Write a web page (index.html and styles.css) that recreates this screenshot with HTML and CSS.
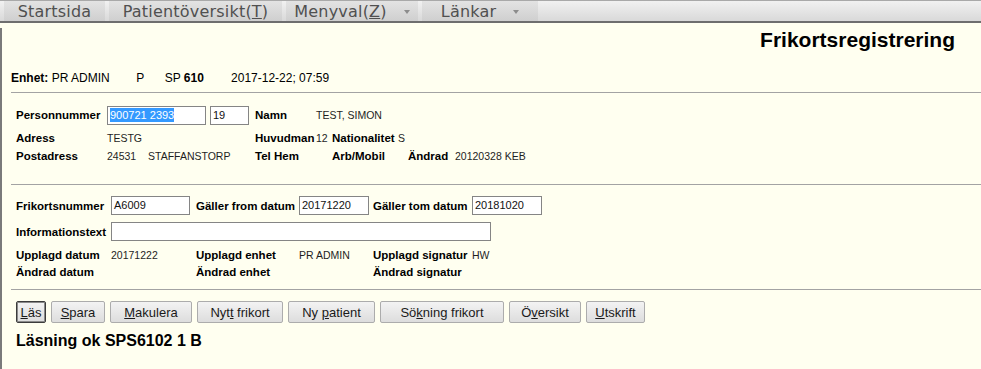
FILE: index.html
```html
<!DOCTYPE html>
<html>
  <head>
    <meta charset="UTF-8">
    <title>Frikortsregistrering</title>
    <link rel="stylesheet" href="styles.css">
  </head>
  <body>
    <!-- Top menu -->
    <div id="menubar">
      <div class="menu-item m-start"><span>Startsida</span></div>
      <div class="menu-item m-patient"><span>Patientöversikt(<u>T</u>)</span></div>
      <div class="menu-item m-menyval"><span>Menyval(<u>Z</u>)</span><span class="caret"></span></div>
      <div class="menu-item m-lankar"><span>Länkar</span><span class="caret"></span></div>
    </div>

    <div id="page">
      <div id="title">Frikortsregistrering</div>

      <!-- Unit line -->
      <div id="unit-line">
        <span class="u-name"><b>Enhet:</b> PR ADMIN</span>
        <span class="u-p">P</span>
        <span class="u-sp">SP <b>610</b></span>
        <span>2017-12-22; 07:59</span>
      </div>

      <div class="divider"></div>

      <!-- Patient -->
      <div class="patient">
        <div class="prow prow-input">
          <span class="lbl w91">Personnummer</span>
          <div class="field f-pnr"><span class="selected">900721 2393</span></div>
          <div class="field f-century">19</div>
          <span class="lbl w61">Namn</span>
          <span class="val">TEST, SIMON</span>
        </div>
        <div class="prow">
          <span class="lbl w91">Adress</span>
          <span class="val w148">TESTG</span>
          <span class="lbl w61">Huvudman</span>
          <span class="val w16">12</span>
          <span class="lbl w66">Nationalitet</span>
          <span class="val">S</span>
        </div>
        <div class="prow">
          <span class="lbl w91">Postadress</span>
          <span class="val w41">24531</span>
          <span class="val w107">STAFFANSTORP</span>
          <span class="lbl w77">Tel Hem</span>
          <span class="lbl w76">Arb/Mobil</span>
          <span class="lbl w47">Ändrad</span>
          <span class="val">20120328 KEB</span>
        </div>
      </div>

      <div class="divider"></div>

      <!-- Frikort -->
      <div class="frikort">
        <div class="frow frow-input">
          <span class="lbl">Frikortsnummer</span>
          <div class="field f-nr">A6009</div>
          <span class="lbl">Gäller from datum</span>
          <div class="field f-date">20171220</div>
          <span class="lbl">Gäller tom datum</span>
          <div class="field f-date">20181020</div>
        </div>
        <div class="frow frow-input frow-info">
          <span class="lbl">Informationstext</span>
          <div class="field f-info"></div>
        </div>
        <div class="frow frow-text frow-first">
          <span class="lbl">Upplagd datum</span>
          <span class="val">20171222</span>
          <span class="lbl">Upplagd enhet</span>
          <span class="val">PR ADMIN</span>
          <span class="lbl">Upplagd signatur</span>
          <span class="val">HW</span>
        </div>
        <div class="frow frow-text">
          <span class="lbl">Ändrad datum</span>
          <span class="val"></span>
          <span class="lbl">Ändrad enhet</span>
          <span class="val"></span>
          <span class="lbl">Ändrad signatur</span>
          <span class="val"></span>
        </div>
      </div>

      <div class="divider"></div>

      <!-- Buttons -->
      <div id="buttons">
        <button class="btn focused b-las"><u>L</u>äs</button>
        <button class="btn b-spara"><u>S</u>para</button>
        <button class="btn b-makulera"><u>M</u>akulera</button>
        <button class="btn b-nytt">Nyt<u>t</u> frikort</button>
        <button class="btn b-nypat">Ny <u>p</u>atient</button>
        <button class="btn b-sok">Sö<u>k</u>ning frikort</button>
        <button class="btn b-oversikt">Ö<u>v</u>ersikt</button>
        <button class="btn b-utskrift"><u>U</u>tskrift</button>
      </div>

      <div id="status">Läsning ok SPS6102 1 B</div>
    </div>
  </body>
</html>
```

FILE: styles.css
```css
/* Reset */
* {
  box-sizing: border-box;
  margin: 0;
  padding: 0;
}

html, body {
  width: 100%;
  height: 100%;
  background-color: #fffff0;
  font-family: "Liberation Sans", Arial, sans-serif;
  color: #000;
  overflow: hidden;
}

/* Top menu bar */
#menubar {
  display: flex;
  gap: 4px;
  height: 23px;
  padding-left: 4px;
  border-top: 1px solid #a9a9a9;
  border-bottom: 2px solid #6e6e6e;
  background: linear-gradient(#f1f1f1, #d9d9d9);
}

.menu-item {
  display: flex;
  align-items: center;
  justify-content: center;
  gap: 17px;
  height: 100%;
  font-family: "DejaVu Sans", Verdana, sans-serif;
  font-size: 16px;
  color: #505050;
  background: linear-gradient(#e3e3e3, #cfcfcf);
  letter-spacing: 0.2px;
  white-space: nowrap;
}

.m-start   { width: 101px; }
.m-patient { width: 173px; }
.m-menyval { width: 132px; }
.m-lankar  { width: 116px; }

/* Small dropdown arrow */
.caret {
  display: inline-block;
  width: 0;
  height: 0;
  border-left: 3px solid transparent;
  border-right: 3px solid transparent;
  border-top: 4px solid #8c8c8c;
  margin-top: 2px;
}

/* Page area under the menu */
#page {
  height: calc(100% - 23px);
  border-left: 2px solid #7a7a7a;
  padding-left: 9px;
}

#title {
  margin-top: 5px;
  padding-right: 26px;
  text-align: right;
  font-size: 21px;
  font-weight: bold;
  line-height: 24px;
}

#unit-line {
  margin-top: 19px;
  font-size: 12px;
  line-height: 14px;
}

#unit-line span {
  display: inline-block;
}

.u-name { width: 122px; }
.u-p    { width: 25px; }
.u-sp   { width: 63px; }

/* Horizontal separators */
.divider {
  margin-top: 7px;
  border-top: 1px solid #a3a3a3;
}

/* Labels and values */
.lbl {
  font-size: 11.5px;
  font-weight: bold;
  white-space: nowrap;
}

.val {
  font-size: 10.5px;
  color: #1e1e1e;
  white-space: nowrap;
}

/* Text fields */
.field {
  height: 19px;
  border: 1px solid #858585;
  background-color: #fff;
  font-size: 11px;
  line-height: 17px;
  padding-left: 2px;
  color: #111;
}

.selected {
  background-color: #3399ff;
  color: #fff;
  padding: 1px 0;
}

/* Patient rows */
.patient {
  margin-top: 12px;
  padding-left: 5px;
}

.prow {
  display: flex;
  align-items: center;
  height: 18px;
}

.prow-input {
  height: 20px;
  margin-bottom: 4px;
}

.w16  { width: 16px; }
.w41  { width: 41px; }
.w47  { width: 47px; }
.w61  { width: 61px; }
.w66  { width: 66px; }
.w76  { width: 76px; }
.w77  { width: 77px; }
.w91  { width: 91px; }
.w107 { width: 107px; }
.w148 { width: 148px; }

.f-pnr {
  width: 99px;
  margin-right: 4px;
}

.f-century {
  width: 39px;
  margin-right: 6px;
}

.patient + .divider {
  margin-top: 19px;
}

/* Frikort rows */
.frikort {
  margin-top: 11px;
  padding-left: 5px;
}

.frow {
  display: grid;
  grid-template-columns: 95px 85px 103px 74px 99px auto;
  align-items: center;
}

.frow-input { height: 19px; }
.frow-info  { margin-top: 7px; }
.frow-text  { height: 17px; }
.frow-first { margin-top: 5px; }

.f-nr   { width: 79px; }
.f-date { width: 70px; }

.f-info {
  grid-column: 2 / -1;
  width: 380px;
}

.frikort + .divider {
  margin-top: 9px;
}

/* Button row */
#buttons {
  display: flex;
  gap: 5px;
  margin-top: 11px;
  padding-left: 5px;
}

.btn {
  height: 22px;
  font-family: "Liberation Sans", Arial, sans-serif;
  font-size: 13px;
  color: #1a1a1a;
  border: 1px solid #acacac;
  border-radius: 2px;
  background: linear-gradient(#f3f3f3, #dddddd);
}

.btn.focused {
  border-color: #3c3c3c;
  box-shadow: inset 0 0 0 1px #8a8a8a;
}

.b-las      { width: 30px; }
.b-spara    { width: 54px; }
.b-makulera { width: 82px; }
.b-nytt     { width: 86px; }
.b-nypat    { width: 87px; }
.b-sok      { width: 124px; }
.b-oversikt { width: 72px; }
.b-utskrift { width: 59px; }

#status {
  margin-top: 9px;
  padding-left: 5px;
  font-size: 16px;
  font-weight: bold;
  line-height: 18px;
}
```
